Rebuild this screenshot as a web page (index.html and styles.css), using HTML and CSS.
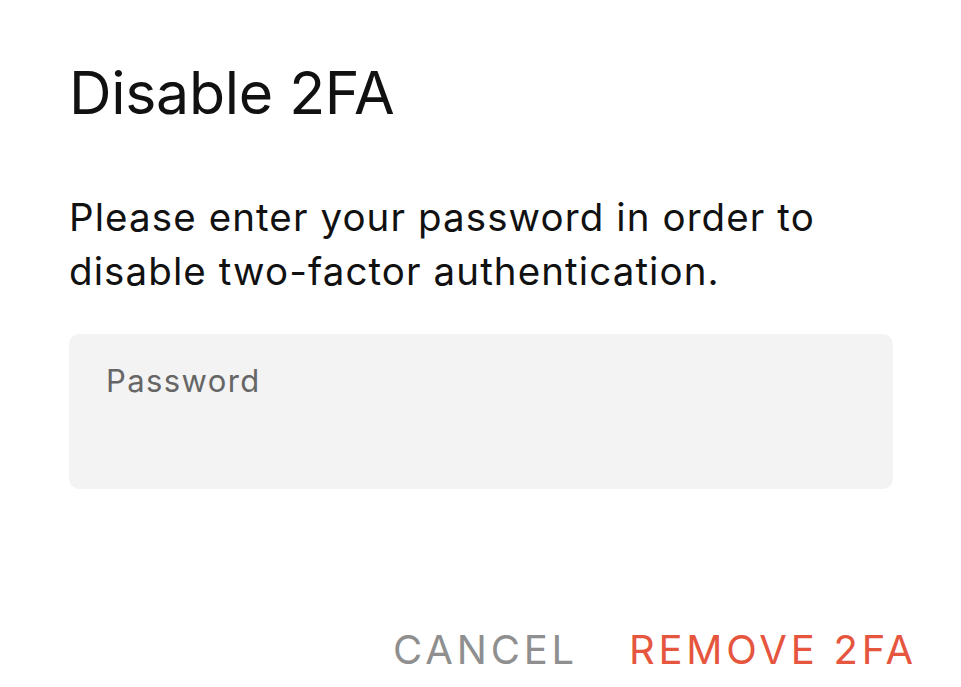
FILE: index.html
```html
<!DOCTYPE html>
<html>
<head>
<meta charset="utf-8">
<link rel="stylesheet" href="styles.css">
</head>
<body>
<div class="dialog">
  <h1 class="title">Disable 2FA</h1>
  <p class="message">Please enter your password in order to disable two-factor authentication.</p>
  <div class="field"><span class="placeholder">Password</span></div>
  <div class="actions">
    <span class="btn cancel">CANCEL</span>
    <span class="btn remove">REMOVE 2FA</span>
  </div>
</div>
</body>
</html>
```

FILE: styles.css
```css
html, body {
  margin: 0;
  padding: 0;
  background: #ffffff;
}
body {
  font-family: Inter, "Noto Sans", sans-serif;
  color: #111111;
}
.dialog {
  width: 961px;
  height: 687px;
  box-sizing: border-box;
  padding: 59px 44px 0 69px;
  display: flex;
  flex-direction: column;
}
.title {
  margin: 0;
  font-size: 59px;
  font-weight: 400;
  line-height: 68px;
  letter-spacing: -0.3px;
}
.message {
  margin: 63px 0 0 0;
  font-size: 38.5px;
  line-height: 54px;
  letter-spacing: 1.1px;
  width: 820px;
}
.field {
  margin-top: 36px;
  width: 824px;
  height: 155px;
  background: #f3f3f3;
  border-radius: 10px;
  box-sizing: border-box;
  padding: 27px 37px;
}
.placeholder {
  font-size: 31px;
  color: #666666;
  line-height: 40px;
  letter-spacing: 1.4px;
}
.actions {
  margin-top: auto;
  margin-bottom: 12px;
  display: flex;
  justify-content: flex-end;
  gap: 51px;
}
.btn {
  font-size: 40px;
  letter-spacing: 3.8px;
  line-height: 50px;
}
.cancel { color: #8f8f8f; }
.remove { color: #e6553e; }
```
